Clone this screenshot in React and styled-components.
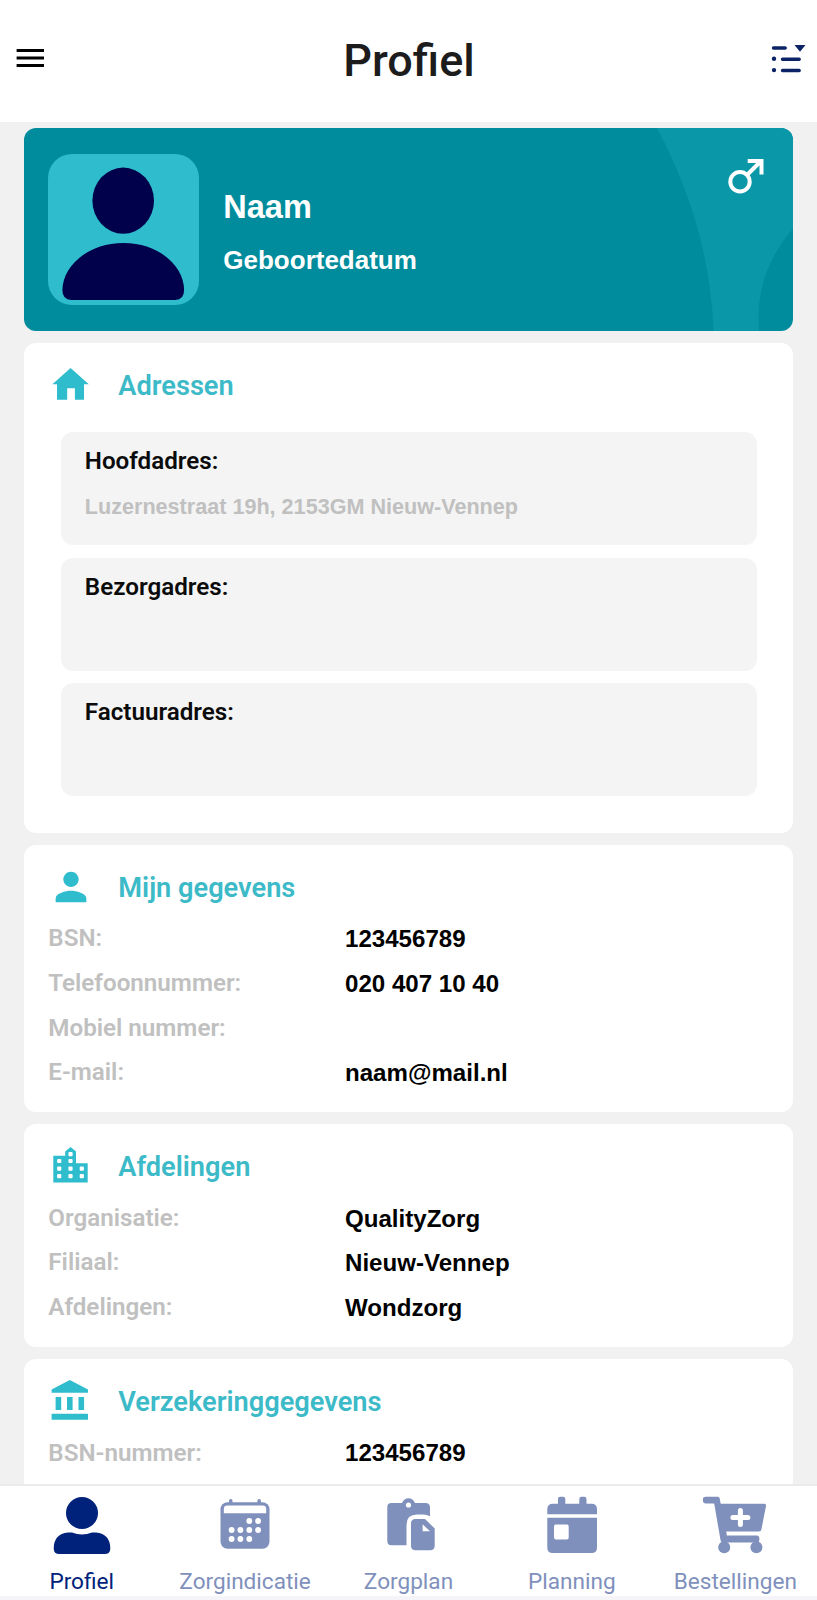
import styled, { createGlobalStyle } from "styled-components";
import { MdPerson } from "react-icons/md";

const GlobalStyle = createGlobalStyle`
  * {
    box-sizing: border-box;
  }

  body {
    margin: 0;
    background: #f1f1f1;
    font-family: Roboto, "Liberation Sans", sans-serif;
  }
`;

const Screen = styled.div`
  height: 1600px;
  display: flex;
  flex-direction: column;
  overflow: hidden;
`;

const TopBar = styled.header`
  flex: none;
  height: 122px;
  padding: 0 7px 7px 16px;
  background: #fff;
  display: grid;
  grid-template-columns: 40px 1fr 40px;
  align-items: center;
`;

const Title = styled.h1`
  margin: 0;
  padding: 6px 8px 0 0;
  text-align: center;
  color: #1c1c1c;
  font-size: 45px;
  font-weight: 500;
  line-height: 52px;
`;

const Content = styled.main`
  flex: 1;
  min-height: 0;
  overflow: hidden;
  padding: 6px 24px 0 24.3px;
  display: flex;
  flex-direction: column;
  gap: 12px;
`;

const Banner = styled.section`
  position: relative;
  flex: none;
  height: 203px;
  border-radius: 12px;
  overflow: hidden;
  background: #008c9c;
  display: flex;
  align-items: center;
  padding: 0 0 1px 24px;
  gap: 24px;
`;

const BannerWave = styled.svg`
  position: absolute;
  top: 0;
  right: 0;
`;

const GenderBadge = styled.svg`
  position: absolute;
  top: 30px;
  right: 29px;
`;

const Avatar = styled.div`
  width: 151px;
  height: 151px;
  border-radius: 24px;
  background: #2fbccd;
`;

const BannerText = styled.div`
  display: flex;
  flex-direction: column;
  gap: 18px;
  padding-top: 5px;
  color: #fff;
  font-family: "Liberation Sans", Arial, sans-serif;
  font-weight: 700;
`;

const Name = styled.span`
  font-size: 32.5px;
  line-height: 38px;
`;

const BirthDate = styled.span`
  font-size: 26px;
  line-height: 32px;
`;

const Card = styled.section`
  flex: none;
  border-radius: 12px;
  background: #fff;
  padding: 19px 24px ${props => props.$bottom || 17}px;
`;

const CardHeader = styled.div`
  display: flex;
  align-items: center;
  gap: 24px;
  height: 53px;
  padding-bottom: 7px;
  color: #2fbccd;
`;

const CardTitle = styled.h2`
  margin: 2px 0 0;
  color: #3cbac8;
  font-size: 27.2px;
  font-weight: 600;
  line-height: 32px;
`;

const AddressList = styled.div`
  display: flex;
  flex-direction: column;
  gap: 12.7px;
  padding: 17px 12.5px 0;
`;

const AddressBox = styled.div`
  height: 113px;
  border-radius: 12px;
  background: #f4f4f4;
  padding: 13px 24px;
`;

const AddressLabel = styled.div`
  color: #0b0b0b;
  font-size: 24.2px;
  font-weight: 600;
  line-height: 32px;
`;

const AddressValue = styled.div`
  margin-top: 15.5px;
  color: #c0c0c0;
  font-family: "Liberation Sans", Arial, sans-serif;
  font-size: 21.6px;
  font-weight: 700;
  line-height: 28px;
`;

const Row = styled.div`
  display: grid;
  grid-template-columns: 296.7px 1fr;
  align-items: center;
  height: 44.6px;
`;

const RowLabel = styled.span`
  padding-bottom: 1.5px;
  color: #c0c0c0;
  font-size: 24.2px;
  font-weight: 600;
`;

const RowValue = styled.span`
  color: #000;
  font-family: "Liberation Sans", Arial, sans-serif;
  font-size: 24.1px;
  font-weight: 700;
`;

const TabBar = styled.nav`
  flex: none;
  height: 116px;
  border-top: 2px solid #ebebeb;
  border-bottom: 4px solid #f5f5f9;
  background: #fff;
  display: grid;
  grid-template-columns: repeat(5, 1fr);
`;

const Tab = styled.a`
  display: flex;
  flex-direction: column;
  align-items: center;
  padding-top: 10px;
  gap: 14px;
  color: ${props => (props.$active ? "#00227a" : "#8090bc")};
  font-size: 22.6px;
  line-height: 28px;
  white-space: nowrap;
`;

function MenuIcon() {
  return (
    <svg width="30" height="24" viewBox="0 0 30 24" stroke="#000" strokeWidth="2.8">
      <path d="M.6 4.5h27.4M.6 12h27.4M.6 19.5h27.4" />
    </svg>
  );
}

function FilterIcon() {
  return (
    <svg width="36" height="32" viewBox="0 0 36 32" fill="#0b2265">
      <path d="M3.5 6H15.2M12.5 17.3h16.700M12.5 28.500h16.700" stroke="#0b2265" strokeWidth="3.4" strokeLinecap="round" />
      <circle cx="4" cy="16.8" r="2.2" />
      <circle cx="4" cy="28.1" r="2.2" />
      <path d="M24.5 3h11l-5.500 6.800z" />
    </svg>
  );
}

function HomeIcon() {
  return (
    <svg width="46" height="46" viewBox="0 0 46 46" fill="currentColor">
      <path d="M22.6 6L40.8 22.3H36V37.8H26.9V26.3H19.2V37.8H9V22.3H4.4Z" />
    </svg>
  );
}

function DepartmentsIcon() {
  const windows = [
    [22.5, 11.2],
    [11.2, 18], [22.5, 18],
    [11.2, 25.7], [22.5, 25.7], [33.8, 25.7],
    [11.2, 33.2], [22.5, 33.2], [33.8, 33.2]
  ];

  return (
    <svg width="46" height="46" viewBox="0 0 46 46" fill="currentColor">
      <path d="M5.3 12.8H17.2V8.500L22.6 4L28 8.500V20.2H39.7V39.500H5.3Z" />
      {windows.map(([x, y]) => (
        <rect key={`${x}-${y}`} x={x - 2.1} y={y - 2.1} width="4.2" height="4.2" rx="1" fill="#fff" />
      ))}
    </svg>
  );
}

function InsuranceIcon() {
  return (
    <svg width="46" height="46" viewBox="0 0 46 46" fill="currentColor">
      <path d="M21.8 2L40 11.6V14.8H3.6V11.6Z" />
      <path d="M7.6 19H13.2V31.9H7.6ZM19 19H24.6V31.9H19ZM30.5 19H36.1V31.9H30.5Z" />
      <rect x="3.6" y="35.8" width="36.4" height="6" rx=".6" />
    </svg>
  );
}

function Silhouette() {
  return (
    <svg width="151" height="151" viewBox="0 0 152 152" fill="#01004b">
      <ellipse cx="75.7" cy="47" rx="31" ry="33.3" />
      <path d="M14.5 137C14.5 114 39 89.5 76 89.5S137 114 137 137Q137 147 128 147H23.5Q14.5 147 14.5 137Z" />
    </svg>
  );
}

function ProfileIcon() {
  return (
    <svg width="58" height="58" viewBox="0 0 58 58" fill="currentColor">
      <circle cx="29" cy="17" r="16" />
      <path d="M15 36.5H19Q29 40.5 39 36.5H43Q57.3 38 57.3 52.5Q57.3 58 51.5 58H6.5Q.7 58 .7 52.5Q.7 38 15 36.5Z" />
    </svg>
  );
}

function IndicationIcon() {
  const dots = [
    [29.3, 25], [38.1, 25],
    [11.6, 34], [20.4, 34], [29.3, 34], [38.1, 34],
    [11.6, 43], [20.4, 43], [29.3, 43]
  ];

  return (
    <svg width="50" height="58" viewBox="0 0 50 58" fill="currentColor">
      <rect x="9" y="3" width="3.5" height="8" rx="1.7" />
      <rect x="37.4" y="3" width="3.5" height="8" rx="1.7" />
      <rect x=".5" y="6.3" width="49" height="46.5" rx="7" />
      <path fill="#fff" d="M3.8 17.3V13Q3.8 9.600 7.500 9.600H42.500Q46.2 9.600 46.2 13V17.3Z" />
      {dots.map(([cx, cy]) => (
        <circle key={`${cx}-${cy}`} cx={cx} cy={cy} r="2.9" fill="#fff" />
      ))}
    </svg>
  );
}

function CarePlanIcon() {
  return (
    <svg width="54" height="58" viewBox="-6 0 54 58" fill="currentColor">
      <path d="M4.5 7H15Q17 2.3 21.5 2.3T28 7H38.5Q43 7 43 11.5V20.3Q40 18.600 36 18.600H30Q19.5 18.600 19.5 29V49.2H4.5Q.3 49.2 .3 45V11Q.3 7 4.5 7Z" />
      <circle cx="21.5" cy="9" r="2.6" fill="#fff" />
      <path d="M28.5 23H38L47.7 32.5V49.5Q47.7 54.2 43 54.2H28.5Q24 54.2 24 49.5V27.5Q24 23 28.5 23Z" />
      <path d="M35.6 28.2V35.3H43Z" fill="#fff" />
    </svg>
  );
}

function PlanningIcon() {
  return (
    <svg width="50" height="58" viewBox="0 0 50 58" fill="currentColor">
      <path d="M11 3Q11 .7 13.3 .7H16Q18.3 .7 18.3 3V7.8H32.3V3Q32.3 .7 34.6 .7H37.2Q39.5 .7 39.5 3V7.8H44.5Q50 7.8 50 13.3V18.3H.3V13.3Q.3 7.8 5.8 7.8H11Z" />
      <path fillRule="evenodd" d="M.3 21.8H50V51.5Q50 57 44.5 57H5.8Q.3 57 .3 51.5ZM9 28.6Q7 28.6 7 30.6V41.5Q7 43.5 9 43.5H19.7Q21.7 43.5 21.7 41.5V30.6Q21.7 28.6 19.7 28.6Z" />
    </svg>
  );
}

function OrdersIcon() {
  return (
    <svg width="64" height="58" viewBox=".6 0 64 58" fill="currentColor">
      <path d="M3.3 .7H15.5Q17 .7 17.3 2.5L18.3 7.8H62Q64 7.8 63.6 10L59 33.5Q58.6 35.6 56.6 35.6H23.8L24.5 39.5H54.5Q57 39.5 57 43Q57 46.6 54.5 46.6H20.2Q18.6 46.6 18.2 44.6L11.8 7.4H3.3Q.3 7.4 .3 4T3.3 .7Z" />
      <circle cx="21.8" cy="51.3" r="6" />
      <circle cx="54" cy="51.3" r="6" />
      <path d="M38 14.5V28.5M30.5 21.5H45.5" stroke="#fff" strokeWidth="5" strokeLinecap="round" />
    </svg>
  );
}

const addresses = [
  { label: "Hoofdadres:", value: "Luzernestraat 19h, 2153GM Nieuw-Vennep" },
  { label: "Bezorgadres:" },
  { label: "Factuuradres:" }
];

const sections = [
  {
    title: "Mijn gegevens",
    icon: <MdPerson size={46} />,
    rows: [
      ["BSN:", "123456789"],
      ["Telefoonnummer:", "020 407 10 40"],
      ["Mobiel nummer:", ""],
      ["E-mail:", "naam@mail.nl"]
    ]
  },
  {
    title: "Afdelingen",
    icon: <DepartmentsIcon />,
    rows: [
      ["Organisatie:", "QualityZorg"],
      ["Filiaal:", "Nieuw-Vennep"],
      ["Afdelingen:", "Wondzorg"]
    ]
  },
  {
    title: "Verzekeringgegevens",
    icon: <InsuranceIcon />,
    rows: [["BSN-nummer:", "123456789"]]
  }
];

const tabs = [
  { label: "Profiel", icon: <ProfileIcon />, active: true },
  { label: "Zorgindicatie", icon: <IndicationIcon /> },
  { label: "Zorgplan", icon: <CarePlanIcon /> },
  { label: "Planning", icon: <PlanningIcon /> },
  { label: "Bestellingen", icon: <OrdersIcon /> }
];

function ProfileBanner() {
  return (
    <Banner>
      <BannerWave width="137" height="203" viewBox="0 0 137 203">
        <path fill="#0a97a8" d="M1 0H137V101Q98 145 103 203H57.5Q54 100 1 0Z" />
      </BannerWave>
      <Avatar>
        <Silhouette />
      </Avatar>
      <BannerText>
        <Name>Naam</Name>
        <BirthDate>Geboortedatum</BirthDate>
      </BannerText>
      <GenderBadge width="36" height="36" viewBox="0 0 36 36" fill="none" stroke="#fff">
        <circle cx="12" cy="23.8" r="9.7" strokeWidth="4" />
        <path d="M19 17L33 3M19.7 3H33.5V16.5" strokeWidth="4" />
      </GenderBadge>
    </Banner>
  );
}

function App() {
  return (
    <Screen>
      <GlobalStyle />
      <TopBar>
        <MenuIcon />
        <Title>Profiel</Title>
        <FilterIcon />
      </TopBar>
      <Content>
        <ProfileBanner />
        <Card $bottom={36.5}>
          <CardHeader>
            <HomeIcon />
            <CardTitle>Adressen</CardTitle>
          </CardHeader>
          <AddressList>
            {addresses.map(({ label, value }) => (
              <AddressBox key={label}>
                <AddressLabel>{label}</AddressLabel>
                <AddressValue>{value}</AddressValue>
              </AddressBox>
            ))}
          </AddressList>
        </Card>
        {sections.map(({ title, icon, rows }) => (
          <Card key={title}>
            <CardHeader>
              {icon}
              <CardTitle>{title}</CardTitle>
            </CardHeader>
            {rows.map(([label, value]) => (
              <Row key={label}>
                <RowLabel>{label}</RowLabel>
                <RowValue>{value}</RowValue>
              </Row>
            ))}
          </Card>
        ))}
      </Content>
      <TabBar>
        {tabs.map(({ label, icon, active }) => (
          <Tab key={label} $active={active}>
            {icon}
            {label}
          </Tab>
        ))}
      </TabBar>
    </Screen>
  );
}

export default App;
